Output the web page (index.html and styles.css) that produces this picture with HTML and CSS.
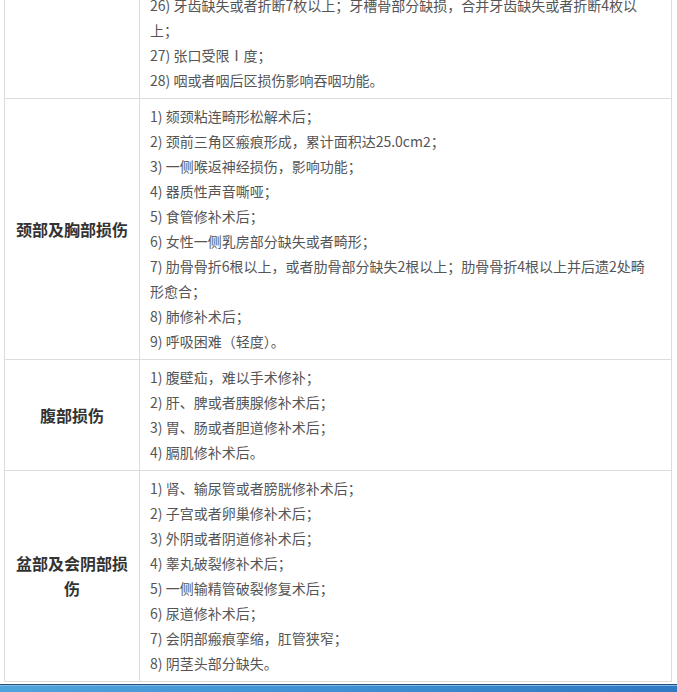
FILE: index.html
```html
<!DOCTYPE html>
<html>
<head>
    <meta charset="utf-8">
    <title>伤残等级标准</title>
    <link rel="stylesheet" href="styles.css">
</head>
<body>
<div class="content">
  <table class="grade-table">
    <tr>
      <td class="part"></td>
      <td class="items">
        <p>26) 牙齿缺失或者折断7枚以上；牙槽骨部分缺损，合并牙齿缺失或者折断4枚以上；</p>
        <p>27) 张口受限Ⅰ度；</p>
        <p>28) 咽或者咽后区损伤影响吞咽功能。</p>
      </td>
    </tr>
    <tr>
      <td class="part">颈部及胸部损伤</td>
      <td class="items">
        <p>1) 颏颈粘连畸形松解术后；</p>
        <p>2) 颈前三角区瘢痕形成，累计面积达25.0cm2；</p>
        <p>3) 一侧喉返神经损伤，影响功能；</p>
        <p>4) 器质性声音嘶哑；</p>
        <p>5) 食管修补术后；</p>
        <p>6) 女性一侧乳房部分缺失或者畸形；</p>
        <p>7) 肋骨骨折6根以上，或者肋骨部分缺失2根以上；肋骨骨折4根以上并后遗2处畸形愈合；</p>
        <p>8) 肺修补术后；</p>
        <p>9) 呼吸困难（轻度）。</p>
      </td>
    </tr>
    <tr>
      <td class="part">腹部损伤</td>
      <td class="items">
        <p>1) 腹壁疝，难以手术修补；</p>
        <p>2) 肝、脾或者胰腺修补术后；</p>
        <p>3) 胃、肠或者胆道修补术后；</p>
        <p>4) 膈肌修补术后。</p>
      </td>
    </tr>
    <tr>
      <td class="part">盆部及会阴部损伤</td>
      <td class="items">
        <p>1) 肾、输尿管或者膀胱修补术后；</p>
        <p>2) 子宫或者卵巢修补术后；</p>
        <p>3) 外阴或者阴道修补术后；</p>
        <p>4) 睾丸破裂修补术后；</p>
        <p>5) 一侧输精管破裂修复术后；</p>
        <p>6) 尿道修补术后；</p>
        <p>7) 会阴部瘢痕挛缩，肛管狭窄；</p>
        <p>8) 阴茎头部分缺失。</p>
      </td>
    </tr>
  </table>
</div>
<div class="footer-bar"></div>
</body>
</html>
```

FILE: styles.css
```css
body {
    margin: 0;
    background: #fff;
    font-family: "Noto Sans CJK SC", "Liberation Sans", sans-serif;
    color: #555;
}

.content {
    padding: 0 5px 0 4px;
    margin-top: -13px;
}

.grade-table {
    width: 668px;
    border-collapse: collapse;
    border: 1px solid #dcdcdc;
}

.grade-table td {
    border: 1px solid #dcdcdc;
    vertical-align: middle;
}

.part {
    width: 114px;
    padding: 0 10px;
    text-align: center;
    font-size: 16px;
    font-weight: bold;
    color: #333;
    line-height: 25px;
}

.items {
    padding: 5px 23px 5px 10px;
    font-size: 14px;
}

.items p {
    margin: 0;
    line-height: 25px;
}

.footer-bar {
    margin-top: 2px;
    height: 7px;
    border-top: 1px solid #24507c;
    background: linear-gradient(to right, #4ea4dc, #3f93d4 45%, #2f78c2);
    box-shadow: inset 0 1px 0 #7fbbe6;
}
```
